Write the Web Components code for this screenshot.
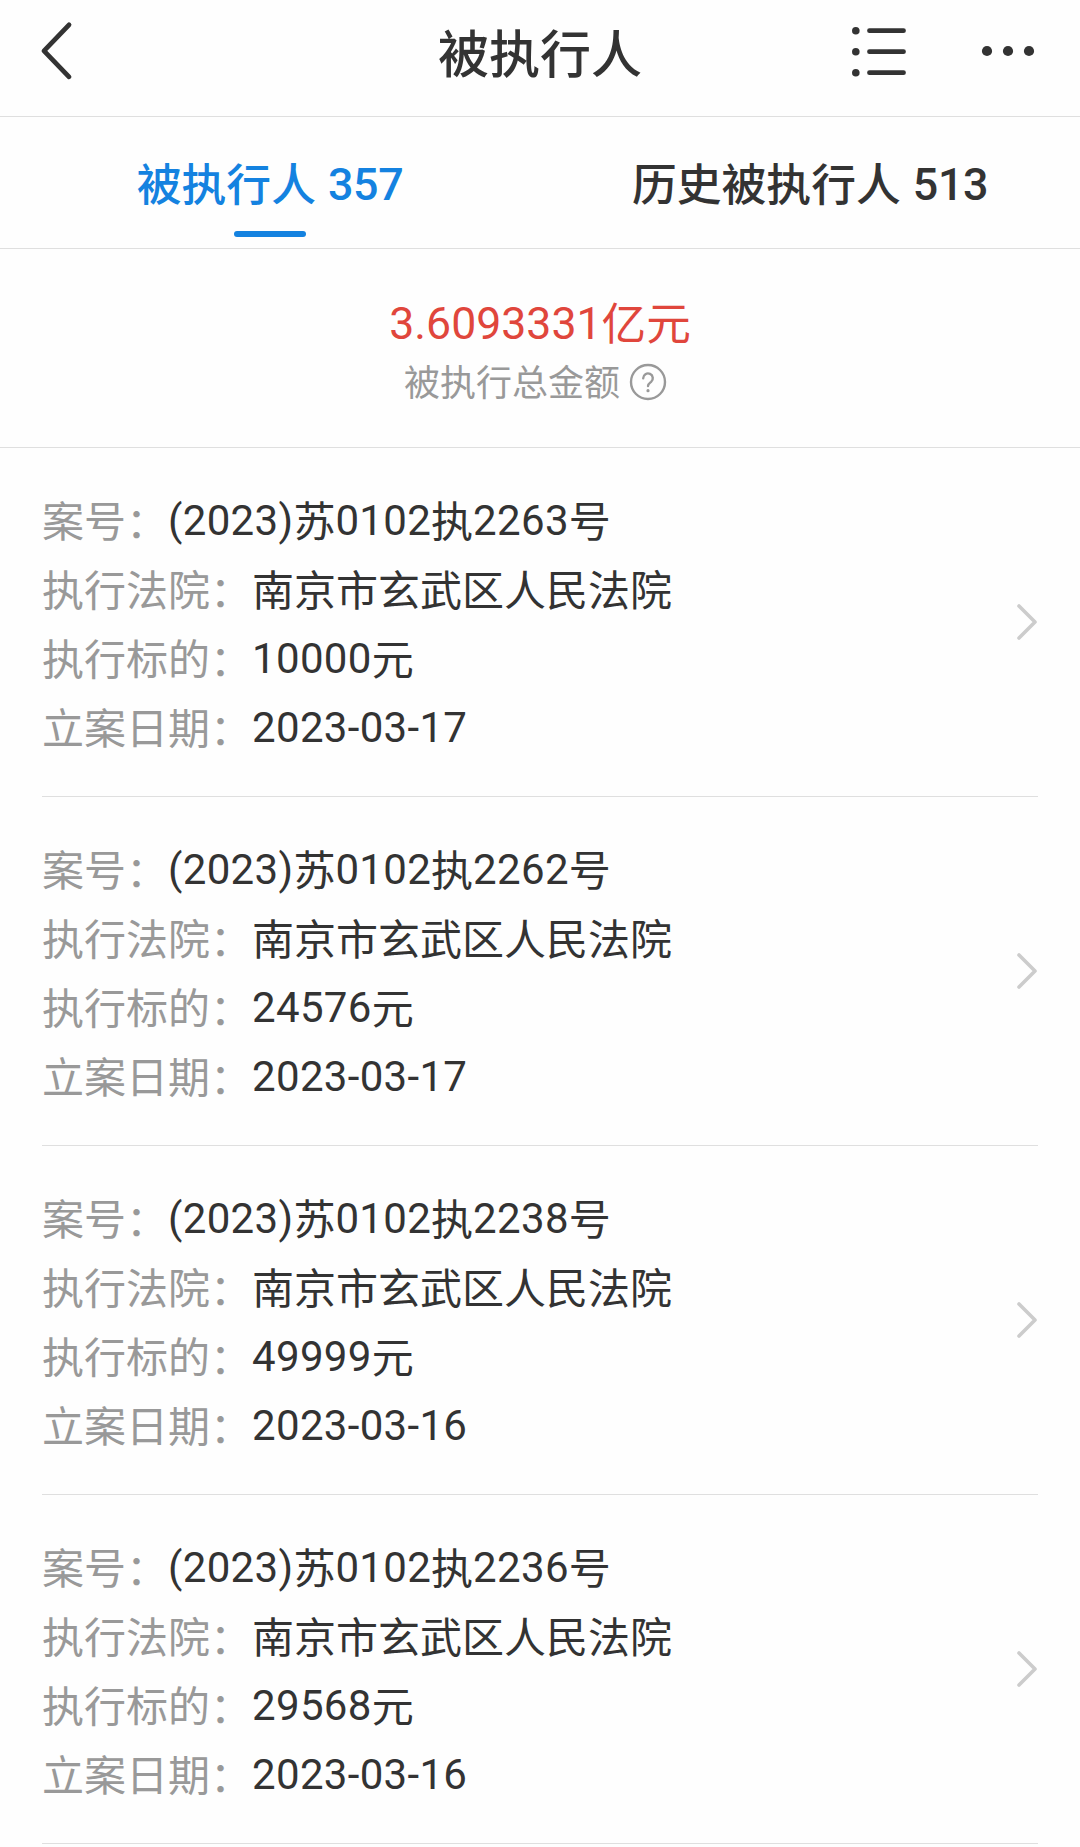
<!DOCTYPE html>
<html lang="zh-CN">
<head>
<meta charset="utf-8">
<title>被执行人</title>
<style>
html, body {
  margin: 0;
  background: #fefefe;
}
body {
  font-family: Roboto, "Noto Sans CJK SC", sans-serif;
  color: #333;
  --line: #dfdfdf;
  --blue: #1482e0;
  --muted: #999;
}
</style>
</head>
<body>
<enforced-page></enforced-page>

<script>
// Wrap digits and other latin runs so they can sit slightly above the CJK baseline
const mixed = text => text.replace(/[\d().-]+/g, run => `<span class="num">${run}</span>`);

class NavBar extends HTMLElement {
  constructor() {
    super();
    this.attachShadow({ mode: 'open' }).innerHTML = `
<style>
:host {
  display: grid;
  grid-template-columns: 1fr auto 1fr;
  align-items: center;
  box-sizing: border-box;
  height: 117px;
  padding: 0 42px 14px;
  border-bottom: 1px solid var(--line);
}
h1 {
  margin: 0;
  padding-top: 9px;
  font-size: 51px;
  line-height: 60px;
  font-weight: 500;
}
svg {
  display: block;
  overflow: visible;
  fill: currentColor;
}
.stroke {
  fill: none;
  stroke: currentColor;
  stroke-width: 4.8;
  stroke-linecap: round;
  stroke-linejoin: round;
}
.actions {
  display: flex;
  justify-content: flex-end;
  align-items: center;
  gap: 76px;
}
</style>
<svg class="stroke" width="32" height="60" viewBox="0 0 32 60"><path d="M27 3.8 2 29.8 27 55.8"/></svg>
<h1><slot></slot></h1>
<div class="actions">
  <svg width="56" height="52" viewBox="0 0 56 52">
    <circle cx="5.8" cy="5.7" r="3.8"/><circle cx="5.8" cy="26.7" r="3.8"/><circle cx="5.8" cy="47.7" r="3.8"/>
    <path class="stroke" d="M19.5 5.7H53.5M19.5 26.7H53.5M19.5 47.7H53.5"/>
  </svg>
  <svg width="56" height="12" viewBox="0 0 56 12">
    <circle cx="5" cy="6" r="5.1"/><circle cx="26" cy="6" r="5.1"/><circle cx="47" cy="6" r="5.1"/>
  </svg>
</div>`;
  }
}
customElements.define('nav-bar', NavBar);

class TabItem extends HTMLElement {
  constructor() {
    super();
    this.attachShadow({ mode: 'open' }).innerHTML = `
<style>
:host {
  flex: 1;
  display: flex;
  flex-direction: column;
  align-items: center;
  font-size: 44.8px;
  line-height: 60px;
  font-weight: 500;
  padding-top: 39px;
}
:host([active]) {
  color: var(--blue);
}
:host([active])::after {
  content: "";
  width: 72px;
  height: 6px;
  margin-top: 15px;
  border-radius: 3px;
  background: var(--blue);
}
.num {
  margin-left: 1px;
  letter-spacing: -.4px;
  line-height: 0;
  vertical-align: 1px;
}
</style>
<span>${this.getAttribute('label')} <span class="num">${this.getAttribute('count')}</span></span>`;
  }
}
customElements.define('tab-item', TabItem);

class TabStrip extends HTMLElement {
  constructor() {
    super();
    this.attachShadow({ mode: 'open' }).innerHTML = `
<style>
:host {
  display: flex;
  box-sizing: border-box;
  height: 132px;
  border-bottom: 1px solid var(--line);
}
</style>
<slot></slot>`;
  }
}
customElements.define('tab-strip', TabStrip);

class TotalAmount extends HTMLElement {
  constructor() {
    super();
    this.attachShadow({ mode: 'open' }).innerHTML = `
<style>
:host {
  display: flex;
  flex-direction: column;
  align-items: center;
  box-sizing: border-box;
  height: 199px;
  padding-top: 46px;
  border-bottom: 1px solid var(--line);
}
.amount {
  color: #e0463c;
  font-size: 44.6px;
  line-height: 60px;
}
.num {
  line-height: 0;
  vertical-align: 1px;
}
.label {
  display: flex;
  align-items: center;
  gap: 6px;
  height: 54px;
  padding-right: 6px;
  color: var(--muted);
  font-size: 36px;
  line-height: 54px;
}
.label span {
  padding-top: 4px;
}
svg {
  fill: none;
  stroke: currentColor;
  stroke-width: 2.4;
  stroke-linecap: round;
}
</style>
<div class="amount">${mixed(this.getAttribute('amount'))}</div>
<div class="label"><span><slot></slot></span>
  <svg width="44" height="38" viewBox="0 0 44 38">
    <circle cx="22" cy="19" r="17"/>
    <path d="M17.2 15.2a4.8 4.8 0 1 1 7.9 3.7c-2 1.6-3.1 2.2-3.1 4.2"/>
    <circle cx="22" cy="27.7" r=".9" fill="currentColor" stroke-width="1.4"/>
  </svg>
</div>`;
  }
}
customElements.define('total-amount', TotalAmount);

class CaseRow extends HTMLElement {
  set data(fields) {
    const root = this.shadowRoot || this.attachShadow({ mode: 'open' });
    root.innerHTML = `
<style>
:host {
  display: flex;
  align-items: center;
  justify-content: space-between;
  box-sizing: border-box;
  height: 349px;
  margin: 0 42px;
  padding-top: 4px;
  border-bottom: 1px solid var(--line);
}
dl {
  margin: 0;
  padding-top: 4px;
  font-size: 42px;
  line-height: 69px;
}
dl div {
  display: flex;
}
dt {
  color: var(--muted);
}
.colon {
  line-height: 0;
  vertical-align: -1px;
}
dd {
  margin: 0;
}
.num {
  letter-spacing: .32px;
  line-height: 0;
  vertical-align: 2px;
}
svg {
  fill: none;
  stroke: #ccc;
  stroke-width: 3.6;
  stroke-linecap: round;
  stroke-linejoin: round;
}
</style>
<dl>${fields.map(([name, value]) => `<div><dt>${name}<span class="colon">：</span></dt><dd>${mixed(value)}</dd></div>`).join('')}</dl>
<svg width="22" height="40" viewBox="0 0 22 40"><path d="M3 2 19 18 3 34"/></svg>`;
  }
}
customElements.define('case-row', CaseRow);

const cases = [
  { no: '2263', amount: '10000', date: '2023-03-17' },
  { no: '2262', amount: '24576', date: '2023-03-17' },
  { no: '2238', amount: '49999', date: '2023-03-16' },
  { no: '2236', amount: '29568', date: '2023-03-16' }
];

class EnforcedPage extends HTMLElement {
  constructor() {
    super();
    this.root = this.attachShadow({ mode: 'open' });
    this.root.innerHTML = `
<style>
:host {
  display: block;
  width: 1080px;
  height: 1847px;
  overflow: hidden;
}
</style>
<nav-bar>被执行人</nav-bar>
<tab-strip>
  <tab-item active label="被执行人" count="357"></tab-item>
  <tab-item label="历史被执行人" count="513"></tab-item>
</tab-strip>
<total-amount amount="3.6093331亿元">被执行总金额</total-amount>
<main></main>`;
  }

  connectedCallback() {
    const list = this.root.querySelector('main');
    cases.forEach(c => {
      const row = document.createElement('case-row');
      row.data = [
        ['案号', `(2023)苏0102执${c.no}号`],
        ['执行法院', '南京市玄武区人民法院'],
        ['执行标的', `${c.amount}元`],
        ['立案日期', c.date]
      ];
      list.appendChild(row);
    });
  }
}
customElements.define('enforced-page', EnforcedPage);
</script>
</body>
</html>
